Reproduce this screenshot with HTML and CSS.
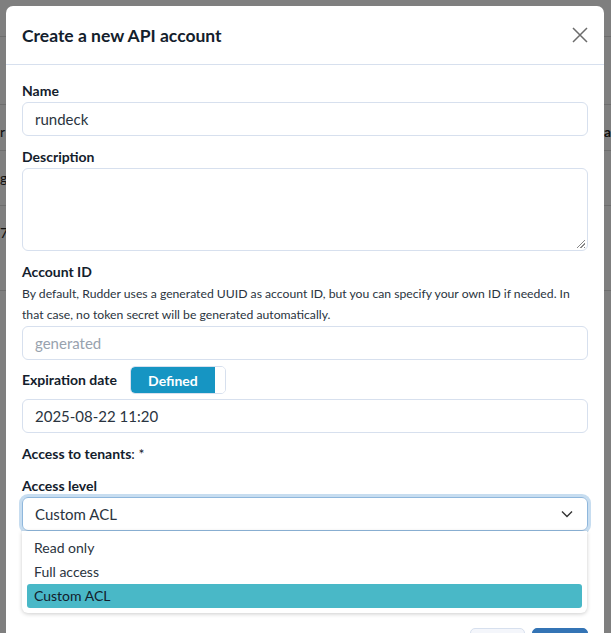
FILE: index.html
```html
<!DOCTYPE html>
<html lang="en">
<head>
<meta charset="utf-8">
<title>Create a new API account</title>
<link rel="stylesheet" href="styles.css">
</head>
<body>
<div class="page">
  <div class="page-top"></div>
  <div class="page-row r1"></div>
  <div class="page-row r2"><span class="frag">r</span><span class="frag right">ra</span></div>
  <div class="page-row r3"><span class="frag">g</span></div>
  <div class="page-row r4"><span class="frag">7</span></div>
</div>
<div class="backdrop"></div>
<div class="modal">
  <div class="modal-header">
    <h5 class="modal-title">Create a new API account</h5>
    <button class="close" aria-label="Close">
      <svg width="16" height="16" viewBox="0 0 16 16"><path d="M1 1 L15 15 M15 1 L1 15" stroke="#6c6c6c" stroke-width="1.5" fill="none"/></svg>
    </button>
  </div>
  <div class="modal-body">
    <div class="group">
      <label class="label">Name</label>
      <div class="input">rundeck</div>
    </div>
    <div class="group">
      <label class="label">Description</label>
      <div class="input textarea"><span class="grip"></span></div>
    </div>
    <div class="group">
      <label class="label">Account ID</label>
      <div class="help">By default, Rudder uses a generated UUID as account ID, but you can specify your own ID if needed. In that case, no token secret will be generated automatically.</div>
      <div class="input placeholder">generated</div>
    </div>
    <div class="group">
      <div class="exp-row">
        <label class="label">Expiration date</label>
        <div class="toggle"><span class="toggle-on">Defined</span><span class="toggle-knob"></span></div>
      </div>
      <div class="input">2025-08-22 11:20</div>
    </div>
    <div class="group">
      <div class="label"><b>Access to tenants</b>: *</div>
    </div>
    <div class="group select-group">
      <label class="label">Access level</label>
      <div class="input select">
        <span>Custom ACL</span>
        <svg width="12" height="8" viewBox="0 0 12 8"><path d="M1 1.5 L6 6.5 L11 1.5" stroke="#333" stroke-width="1.4" fill="none"/></svg>
      </div>
      <ul class="dropdown">
        <li>Read only</li>
        <li>Full access</li>
        <li class="active">Custom ACL</li>
      </ul>
    </div>
  </div>
  <div class="modal-footer">
    <button class="btn btn-default" aria-label="Close"></button>
    <button class="btn btn-primary" aria-label="Create"></button>
  </div>
</div>
</body>
</html>
```
FILE: styles.css
```css
* { box-sizing: border-box; }
html, body { margin: 0; padding: 0; }
body {
  width: 611px;
  height: 633px;
  overflow: hidden;
  font-family: "Lato", "Liberation Sans", sans-serif;
  color: #13202c;
  background: #ffffff;
}
.page { display: flex; flex-direction: column; }
.page-top { height: 37px; border-bottom: 1px solid #dcdcdc; }
.page-row { border-bottom: 1px solid #dcdcdc; position: relative; font-family: "Lato", sans-serif; font-size: 14px; color: #222; }
.page-row.r1 { height: 68px; }
.page-row.r2 { height: 46px; }
.page-row.r3 { height: 55px; }
.page-row.r4 { height: 85px; }
.frag { display: block; padding: 18px 0 0 0; }
.frag.right { position: absolute; right: 0; top: 0; font-weight: bold; }
.backdrop {
  position: fixed;
  inset: 0;
  background: rgba(0, 0, 0, 0.5);
}
.modal {
  position: fixed;
  left: 6px;
  top: 6px;
  width: 598px;
  background: #fff;
  border-radius: 7px 7px 0 0;
}
.modal-header {
  height: 59px;
  display: flex;
  align-items: center;
  justify-content: space-between;
  padding: 0 16px;
  border-bottom: 1px solid #d7e0ee;
}
.modal-title {
  margin: 0;
  font-size: 17.5px;
  font-weight: 700;
  color: #13202c;
}
.close {
  border: 0;
  background: none;
  padding: 0;
  width: 16px;
  height: 16px;
  display: flex;
}
.modal-body {
  padding: 16px 16px 0;
  display: flex;
  flex-direction: column;
  gap: 11px;
}
.group { display: flex; flex-direction: column; position: relative; }
.label {
  display: block;
  font-size: 14px;
  font-weight: 700;
  line-height: 20px;
  margin-bottom: 1px;
  color: #13202c;
}
div.label { font-weight: 400; }
div.label b { font-weight: 700; }
.input {
  height: 34px;
  border: 1px solid #d7e0ee;
  border-radius: 6px;
  padding: 0 12px;
  display: flex;
  align-items: center;
  font-size: 15px;
  color: #2a3440;
}
.textarea { height: 83px; position: relative; }
.grip {
  position: absolute;
  right: 2px;
  bottom: 2px;
  width: 9px;
  height: 9px;
  background: repeating-linear-gradient(135deg, transparent 0 1.5px, #888 1.5px 2.5px);
  clip-path: polygon(100% 0, 100% 100%, 0 100%);
}
.help {
  font-size: 12.2px;
  line-height: 21px;
  color: #2a3440;
  margin-bottom: 1px;
}
.placeholder { color: #98a2ae; }
.exp-row {
  display: flex;
  align-items: center;
  gap: 13px;
  height: 28px;
  margin-top: -5px;
  margin-bottom: 5px;
}
.exp-row .label { margin: 0; }
.toggle {
  display: flex;
  width: 96px;
  height: 28px;
  border: 1px solid #d7e0ee;
  border-radius: 5px;
  overflow: hidden;
}
.toggle-on {
  width: 84px;
  background: #1695c3;
  color: #fff;
  font-weight: 700;
  font-size: 14px;
  display: flex;
  align-items: center;
  justify-content: center;
  border-radius: 4px 0 0 4px;
}
.toggle-knob { flex: 1; background: #fff; }
.select {
  justify-content: space-between;
  border-color: #8fb7dc;
  box-shadow: 0 0 0 3px #c7ddf0;
  padding-right: 14px;
}
.dropdown {
  list-style: none;
  margin: 0;
  padding: 5px;
  position: absolute;
  top: 55px;
  left: 0;
  right: 1px;
  background: #fff;
  border-radius: 0 0 6px 6px;
  box-shadow: 0 1px 4px rgba(0, 0, 0, 0.2);
  z-index: 2;
}
.dropdown li {
  height: 24px;
  line-height: 24px;
  padding: 0 7px;
  font-size: 14px;
  color: #2a3440;
  border-radius: 3px;
}
.dropdown li.active { background: #49b8c7; color: #13202c; }
.modal-footer {
  display: flex;
  justify-content: flex-end;
  gap: 7px;
  padding: 97px 16px 16px;
}
.btn {
  height: 34px;
  border-radius: 5px;
  padding: 0;
}
.btn-default { width: 55px; background: #f4f6fb; border: 1px solid #d7e0ee; }
.btn-primary { width: 56px; background: #3474b5; border: 1px solid #3474b5; }
```
